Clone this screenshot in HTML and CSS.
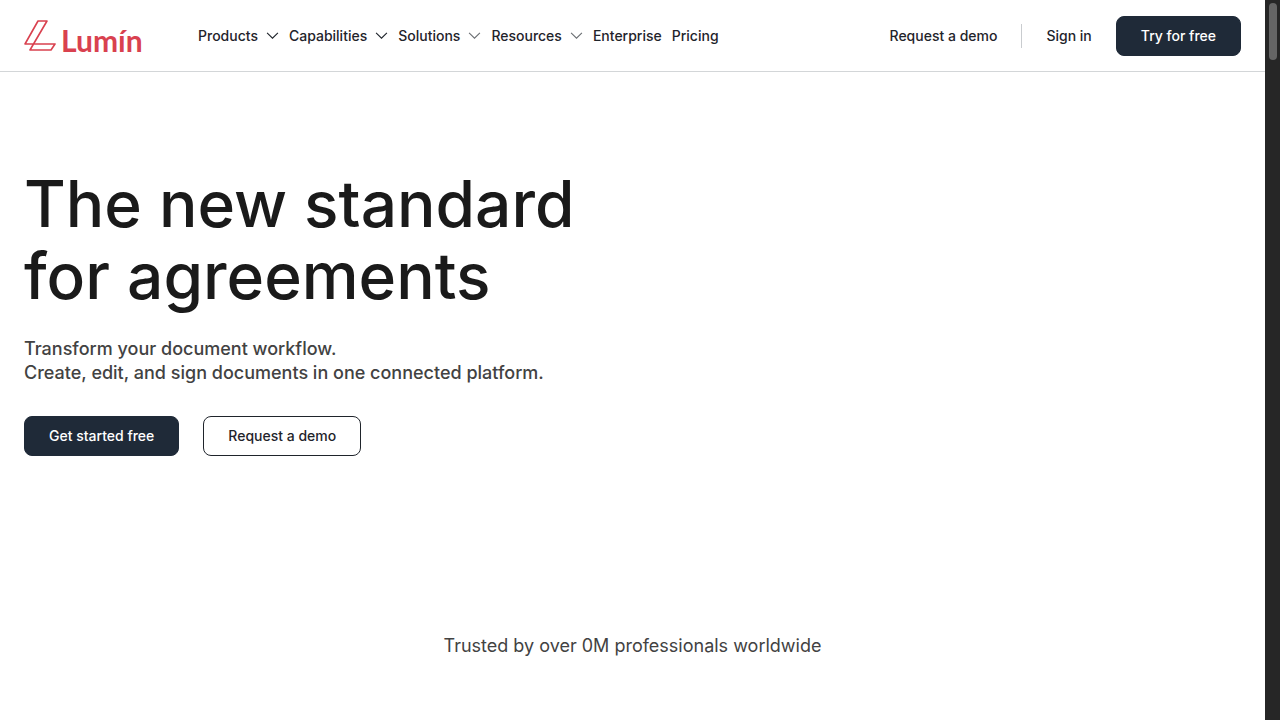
FILE: index.html
```html
<!DOCTYPE html>
<html lang="en">
<head>
<meta charset="utf-8">
<meta name="viewport" content="width=device-width, initial-scale=1">
<title>Lumin</title>
<link rel="stylesheet" href="styles.css">
</head>
<body>
<div class="page">
  <header class="header">
    <a class="logo" href="#" aria-label="Lumin home">
      <svg class="logo-mark" viewBox="0 0 32 32" aria-hidden="true"><path d="M14 1H23L6 30H27L31 24H1Z"/></svg>
      <span class="logo-text">Lumín</span>
    </a>
    <nav class="nav" aria-label="Main">
      <button class="nav-item" type="button">Products <svg class="chevron" viewBox="0 0 12 8" aria-hidden="true"><path d="M1 1.500L6 6.500L11 1.500"/></svg></button>
      <button class="nav-item" type="button">Capabilities <svg class="chevron" viewBox="0 0 12 8" aria-hidden="true"><path d="M1 1.500L6 6.500L11 1.500"/></svg></button>
      <button class="nav-item" type="button">Solutions <svg class="chevron light" viewBox="0 0 12 8" aria-hidden="true"><path d="M1 1.500L6 6.500L11 1.500"/></svg></button>
      <button class="nav-item" type="button">Resources <svg class="chevron light" viewBox="0 0 12 8" aria-hidden="true"><path d="M1 1.500L6 6.500L11 1.500"/></svg></button>
      <a class="nav-item" href="#">Enterprise</a>
      <a class="nav-item" href="#">Pricing</a>
    </nav>
    <div class="account">
      <a class="text-link" href="#">Request a demo</a>
      <span class="divider"></span>
      <a class="text-link" href="#">Sign in</a>
      <a class="button primary" href="#">Try for free</a>
    </div>
  </header>
  <main>
    <section class="hero">
      <h1 class="title">The new standard<br>for agreements</h1>
      <p class="lead">Transform your document workflow.<br>Create, edit, and sign documents in one connected platform.</p>
      <div class="actions">
        <a class="button primary" href="#">Get started free</a>
        <a class="button outline" href="#">Request a demo</a>
      </div>
    </section>
    <p class="trusted">Trusted by over 0M professionals worldwide</p>
  </main>
</div>
<div class="scrollbar" aria-hidden="true"><div class="thumb"></div></div>
</body>
</html>
```
FILE: styles.css
```css
* { box-sizing: border-box; }
body {
  margin: 0;
  min-height: 100vh;
  display: flex;
  background: #fff;
  color: #1f242b;
  font: 500 14px/24px Inter, "Liberation Sans", sans-serif;
}
a { color: inherit; text-decoration: none; }
.page { flex: 1; min-width: 0; }
.header {
  display: flex;
  align-items: center;
  height: 72px;
  padding: 0 24px;
  border-bottom: 1px solid #d3d6d8;
}
.logo {
  display: flex;
  align-items: center;
  gap: 5px;
  width: 174px;
  color: #d9414f;
}
.logo-mark {
  width: 32px;
  height: 32px;
  fill: none;
  stroke: currentColor;
  stroke-width: 1.6;
  stroke-linejoin: round;
}
.logo-text { font: 700 30px/32px Lato, sans-serif; padding-top: 8px; }
.nav { display: flex; align-items: center; gap: 10px; }
.nav-item {
  display: flex;
  align-items: center;
  gap: 8px;
  padding: 0;
  border: 0;
  background: none;
  color: inherit;
  font: inherit;
  white-space: nowrap;
}
.chevron {
  width: 13px;
  height: 9px;
  fill: none;
  stroke: #1f242b;
  stroke-width: 1;
}
.chevron.light { stroke: #6b6f73; }
.account {
  display: flex;
  align-items: center;
  gap: 24px;
  margin-left: auto;
  white-space: nowrap;
}
.divider { width: 1px; height: 24px; background: #c9cccf; }
.button {
  padding: 7px 24px;
  border: 1px solid #1f2a38;
  border-radius: 8px;
  white-space: nowrap;
}
.primary { background: #1f2a38; color: #fff; }
.outline { border-color: #1f242b; }
.hero { padding: 96px 24px 0; }
.title {
  margin: 0;
  color: #1a1a1a;
  font-size: 64px;
  font-weight: 500;
  line-height: 72px;
}
.lead {
  margin: 25px 0 31px;
  color: #424242;
  font-size: 18px;
  font-weight: 450;
}
.actions { display: flex; gap: 24px; }
.trusted {
  margin: 178px 0 0;
  color: #424242;
  font-size: 18px;
  font-weight: 400;
  text-align: center;
}
.scrollbar {
  width: 15px;
  padding: 3px 3px 3px 4px;
  background: #262626;
}
.thumb { height: 57px; border-radius: 4px; background: #656565; }
```
